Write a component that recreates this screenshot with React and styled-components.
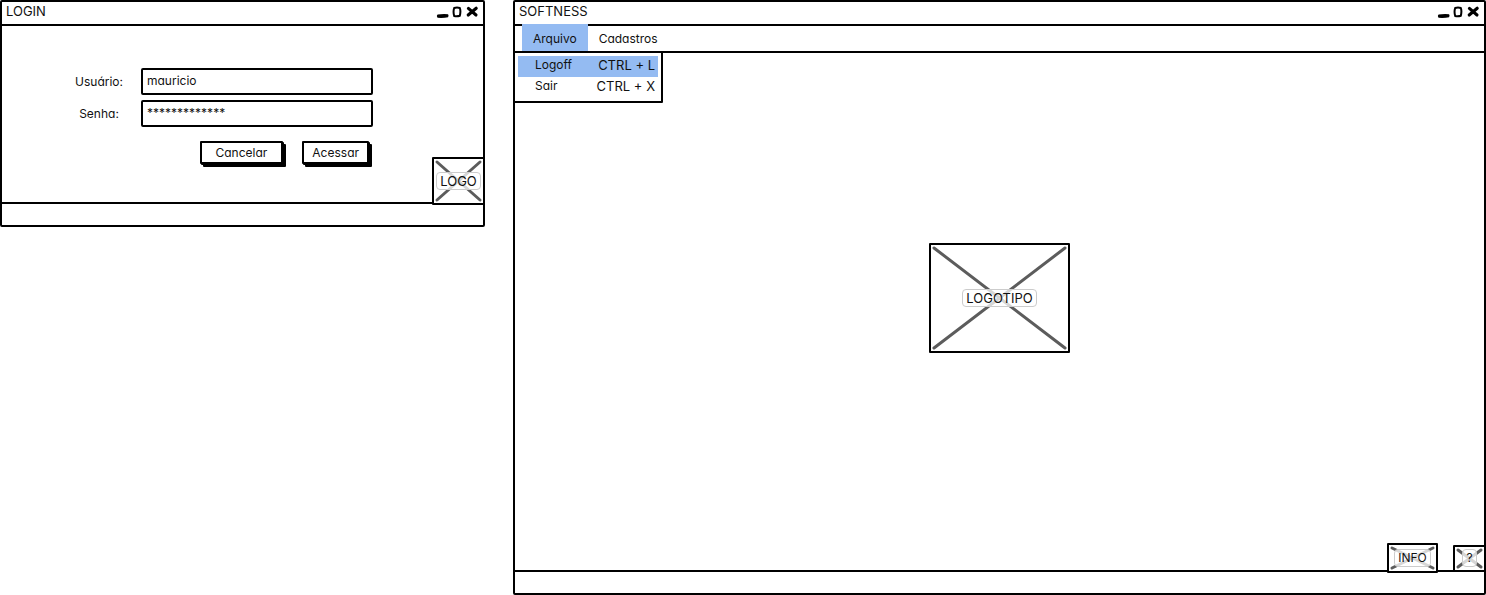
import React from "react";
import styled, { createGlobalStyle } from "styled-components";

const GlobalStyle = createGlobalStyle`
  * { box-sizing: border-box; }
  body { margin: 0; background: #fff; }
  body, button, input {
    color: #111;
    font-family: Inter, "Liberation Sans", sans-serif;
    font-size: 12px;
    line-height: 18px;
    font-feature-settings: "cv11" 1;
  }
`;

const Page = styled.main`
  display: grid;
  grid-template-columns: 485fr 973fr;
  gap: 28px;
  align-items: start;
  min-height: 100vh;
`;

const Frame = styled.section`
  display: flex;
  flex-direction: column;
  min-height: ${(p) => (p.$fill ? "100vh" : "auto")};
  border: 2px solid #000;
  border-radius: 2px;
`;

const TitleBar = styled.header`
  display: flex;
  justify-content: space-between;
  height: 24px;
  padding: 0 4px;
  border-bottom: 2px solid #000;
`;

const Title = styled.h1`
  margin: 0;
  font-size: 13px;
  font-weight: 400;
  line-height: 18px;
`;

const Controls = styled.div`
  display: flex;
  gap: 2px;
  padding-top: 4px;
`;

const ControlButton = styled.button`
  width: 13px;
  height: 12px;
  padding: 0;
  border: 0;
  background: none;
  svg { display: block; }
`;

const Body = styled.div`
  position: relative;
  flex: 1;
  display: flex;
  flex-direction: column;
`;

const StatusBar = styled.footer`
  height: 23px;
  border-top: 2px solid #000;
`;

const Form = styled.form`
  display: flex;
  flex-direction: column;
  gap: 5px;
  width: 296px;
  margin: 42px 0 36px 75px;
`;

const Field = styled.div`
  display: grid;
  grid-template-columns: 44px 1fr;
  gap: 20px;
  align-items: center;
`;

const Label = styled.label`
  display: flex;
  justify-content: center;
  white-space: nowrap;
`;

const TextBox = styled.input`
  width: 100%;
  height: 27px;
  padding: 0 4px 2px;
  border: 2px solid #000;
  border-radius: 2px;
  background: #fff;
  outline: none;
`;

const Actions = styled.div`
  display: flex;
  justify-content: flex-end;
  gap: 19px;
  padding: 9px 4px 2px 0;
`;

const ActionButton = styled.button`
  height: 23px;
  padding: 0 ${(p) => (p.$wide ? 14 : 8)}px;
  border: 2px solid #000;
  border-radius: 1px;
  background: #fff;
  box-shadow: 1px 1px 0 #000, 3px 3px 0 #000;
`;

const Placeholder = styled.div`
  position: relative;
  display: flex;
  align-items: center;
  justify-content: center;
  width: ${(p) => p.$width}px;
  height: ${(p) => p.$height}px;
  border: 2px solid #000;
  border-radius: 1px;
  background: #fff;
`;

const Cross = styled.svg`
  position: absolute;
  inset: 0;
  width: 100%;
  height: 100%;
`;

const Caption = styled.span`
  position: relative;
  padding: 0 3px;
  border: 1px solid #ccc;
  border-radius: 4px;
  background: rgba(255, 255, 255, 0.75);
  font-size: ${(p) => (p.$small ? 12 : 13)}px;
  line-height: 16px;
`;

const Corner = styled.div`
  position: absolute;
  right: -2px;
  bottom: -3px;
  display: flex;
  align-items: center;
  gap: 15px;
`;

const Center = styled.div`
  flex: 1;
  display: flex;
  align-items: center;
  justify-content: center;
  padding-bottom: 28px;
`;

const MenuBar = styled.nav`
  position: relative;
  z-index: 1;
  display: flex;
  height: 27px;
  padding-left: 7px;
  border-bottom: 2px solid #000;
`;

const MenuButton = styled.button`
  height: 27px;
  margin-top: -2px;
  padding: 2px 11px 0;
  border: 0;
  background: ${(p) => (p.$active ? "#94bbf2" : "transparent")};
`;

const Dropdown = styled.div`
  position: absolute;
  top: 25px;
  left: -2px;
  width: 150px;
  padding: 3px;
  border: 2px solid #000;
  border-radius: 1px;
  background: #fff;
`;

const MenuItem = styled.button`
  display: flex;
  justify-content: space-between;
  width: 100%;
  height: 21px;
  padding: 0 3px 3px 17px;
  border: 0;
  background: ${(p) => (p.$active ? "#94bbf2" : "transparent")};
`;

const Shortcut = styled.span`
  font-size: 13px;
`;

function WindowControls() {
  return (
    <Controls>
      <ControlButton aria-label="Minimizar">
        <svg width="13" height="12" viewBox="0 0 13 12">
          <path d="M1.6 8.6 Q6 7.8 12 8.2 Q13 9.5 12 11.2 Q8 12.2 1.6 11.8 Q0.2 10 1.6 8.6Z" fill="#000" />
        </svg>
      </ControlButton>
      <ControlButton aria-label="Maximizar">
        <svg width="13" height="12" viewBox="0 0 13 12">
          <path d="M3.2 2 Q6 1 8.8 2 Q10 5 8.8 9.8 Q6 10.8 3.2 10 Q1.9 5.5 3.2 2Z" fill="none" stroke="#000" strokeWidth="2" />
        </svg>
      </ControlButton>
      <ControlButton aria-label="Fechar">
        <svg width="13" height="12" viewBox="0 0 13 12">
          <path d="M2.4 2.4 L10 9 M10.2 2.2 L2.2 9" stroke="#000" strokeWidth="3.1" strokeLinecap="round" />
        </svg>
      </ControlButton>
    </Controls>
  );
}

function Window({ title, fill, children }) {
  return (
    <Frame $fill={fill}>
      <TitleBar>
        <Title>{title}</Title>
        <WindowControls />
      </TitleBar>
      {children}
      <StatusBar />
    </Frame>
  );
}

function ImageBox({ width, height, small, children }) {
  const right = width - 7;
  const bottom = height - 7;
  return (
    <Placeholder $width={width} $height={height}>
      <Cross>
        <path
          d={`M3 3 L${right} ${bottom} M${right} 3 L3 ${bottom}`}
          stroke="#5c5c5c"
          strokeWidth="3"
          strokeLinecap="round"
        />
      </Cross>
      <Caption $small={small}>{children}</Caption>
    </Placeholder>
  );
}

export default function App() {
  return (
    <>
      <GlobalStyle />
      <Page>
        <Window title="LOGIN">
          <Body>
            <Form onSubmit={(e) => e.preventDefault()}>
              <Field>
                <Label htmlFor="user">Usuário:</Label>
                <TextBox id="user" defaultValue="mauricio" />
              </Field>
              <Field>
                <Label htmlFor="password">Senha:</Label>
                <TextBox id="password" defaultValue="*************" autoComplete="off" />
              </Field>
              <Actions>
                <ActionButton type="button" $wide>Cancelar</ActionButton>
                <ActionButton type="submit">Acessar</ActionButton>
              </Actions>
            </Form>
            <Corner>
              <ImageBox width={53} height={48}>LOGO</ImageBox>
            </Corner>
          </Body>
        </Window>

        <Window title="SOFTNESS" fill>
          <MenuBar>
            <MenuButton $active>Arquivo</MenuButton>
            <MenuButton>Cadastros</MenuButton>
            <Dropdown>
              <MenuItem $active><span>Logoff</span><Shortcut>CTRL + L</Shortcut></MenuItem>
              <MenuItem><span>Sair</span><Shortcut>CTRL + X</Shortcut></MenuItem>
            </Dropdown>
          </MenuBar>
          <Body>
            <Center>
              <ImageBox width={141} height={110}>LOGOTIPO</ImageBox>
            </Center>
            <Corner>
              <ImageBox width={51} height={30} small>INFO</ImageBox>
              <ImageBox width={33} height={27} small>?</ImageBox>
            </Corner>
          </Body>
        </Window>
      </Page>
    </>
  );
}
